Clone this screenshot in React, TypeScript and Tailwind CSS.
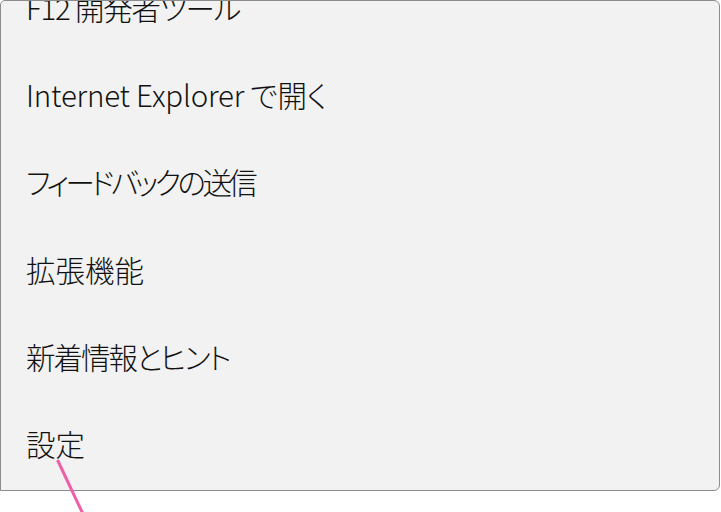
const items = [
  { label: 'F12 開発者ツール', tracking: 'tracking-[-1.2px]' },
  { label: 'Internet Explorer で開く', tracking: 'tracking-[-0.2px]' },
  { label: 'フィードバックの送信', tracking: 'tracking-[-3.6px]' },
  { label: '拡張機能', tracking: '' },
  { label: '新着情報とヒント', tracking: 'tracking-[-2px]' },
  { label: '設定', tracking: '' },
]

export default function App() {
  return (
    <div className="relative w-[721px] h-[512px] bg-white overflow-hidden">
      {/* menu panel, scrolled so the first entry is cut off */}
      <div className="w-[720px] h-[491px] bg-[#f2f2f2] border border-[#8c8c8c] rounded-tl-[5px] rounded-tr-[6px] rounded-br-[6px] overflow-hidden">
        <ul
          className="mt-[-37px] text-[29.5px] font-light text-[#111] [font-feature-settings:'palt']"
          style={{ fontFamily: '"Noto Sans CJK JP", sans-serif' }}
        >
          {items.map((item) => (
            <li key={item.label} className={`h-[87.25px] flex items-center pl-[25px] leading-none whitespace-pre ${item.tracking}`}>
              {item.label}
            </li>
          ))}
        </ul>
      </div>

      {/* callout line */}
      <svg className="absolute left-0 top-0 pointer-events-none" width="721" height="512">
        <line x1="57.5" y1="460" x2="83" y2="514" stroke="#ef5fa7" strokeWidth="3" />
      </svg>
    </div>
  )
}
